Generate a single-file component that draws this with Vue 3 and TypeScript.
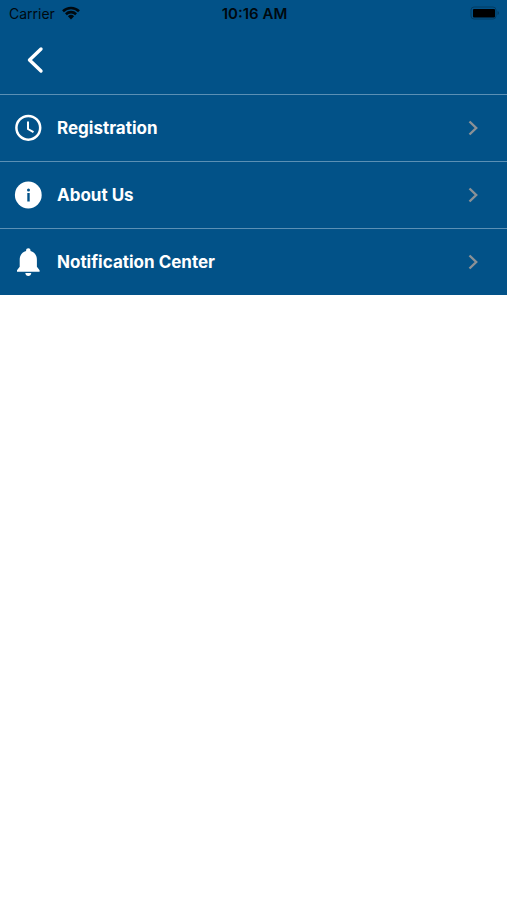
<script setup lang="ts">
type IconName = 'clock' | 'info' | 'bell'

interface MenuItem {
  label: string
  icon: IconName
}

const items: MenuItem[] = [
  { label: 'Registration', icon: 'clock' },
  { label: 'About Us', icon: 'info' },
  { label: 'Notification Center', icon: 'bell' },
]
</script>

<template>
  <main class="screen">
    <div class="status">
      <div class="carrier">
        <span>Carrier</span>
        <svg class="wifi" viewBox="0 0 18 14" aria-hidden="true">
          <path d="M1 5.2a11.6 11.6 0 0 1 16 0M3.9 8.2a7.4 7.4 0 0 1 10.2 0" />
          <path class="dot" d="M5.9 10.2a4.6 4.6 0 0 1 6.2 0L9 13.4z" />
        </svg>
      </div>
      <time class="time">10:16 AM</time>
      <div class="power">
        <svg class="battery" viewBox="0 0 30 14" aria-hidden="true">
          <rect class="shell" x="1" y="1" width="25" height="12" rx="3" />
          <rect x="3" y="3" width="22" height="8.500" rx="1" />
          <path class="cap" d="M27.5 5v4q1.5-.6 1.5-2t-1.5-2z" />
        </svg>
      </div>
    </div>
    <header class="bar">
      <button class="back" type="button" aria-label="Back">
        <svg viewBox="0 0 18 28" aria-hidden="true">
          <path d="M15 3 3.500 14 15 25" />
        </svg>
      </button>
    </header>
    <nav class="menu">
      <a v-for="item in items" :key="item.label" class="row" href="#">
        <svg v-if="item.icon === 'clock'" class="icon" viewBox="0 0 28 28" aria-hidden="true">
          <circle class="line" cx="14.300" cy="13.800" r="11.900" />
          <path class="line hands" d="M14 7.500V15l5.500 3.200" />
        </svg>
        <svg v-else-if="item.icon === 'info'" class="icon" viewBox="0 0 28 28" aria-hidden="true">
          <circle cx="14.300" cy="14" r="13.400" />
          <circle class="cut" cx="14.500" cy="9" r="1.500" />
          <path class="cut" d="M13.300 12h2.400v8.500h-2.400z" />
        </svg>
        <svg v-else class="icon" viewBox="0 0 28 28" aria-hidden="true">
          <path
            d="M14.300.2c-1.300 0-2.200.9-2.200 2.100v.8c-4 1-6.400 4.300-6.400 8.600v7.100L3 22.200v1.500h22.600v-1.500l-2.700-3.400v-7.100c0-4.300-2.400-7.600-6.400-8.600v-.8c0-1.200-.9-2.100-2.200-2.100z"
          />
          <path d="M11.300 25h6q-.4 3-3 3t-3-3z" />
        </svg>
        <span class="label">{{ item.label }}</span>
        <svg class="chevron" viewBox="0 0 10 16" aria-hidden="true">
          <path d="m1.500 1.500 6.700 6.500-6.700 6.500" />
        </svg>
      </a>
    </nav>
  </main>
</template>

<style>
body {
  margin: 0;
  background: #fff;
}
</style>

<style scoped>
.screen {
  font-family: Inter, "Liberation Sans", sans-serif;
  background: #025288;
}

.status {
  display: grid;
  grid-template-columns: 1fr auto 1fr;
  align-items: center;
  height: 26px;
  padding: 0 7px 0 9px;
  color: #00090f;
  font-size: 14px;
}

.carrier {
  display: flex;
  align-items: center;
  gap: 7px;
}

.wifi {
  width: 18px;
  height: 14px;
  fill: none;
  stroke: #00090f;
  stroke-width: 2.6;
}

.wifi .dot {
  fill: #00090f;
  stroke: none;
}

.time {
  font-size: 15px;
  font-weight: 600;
}

.power {
  display: flex;
  justify-content: flex-end;
}

.battery {
  width: 30px;
  height: 14px;
  fill: #000;
}

.battery .shell {
  fill: none;
  stroke: #033c63;
}

.battery .cap {
  fill: #033c63;
}

.bar {
  display: flex;
  align-items: center;
  height: 68px;
  padding: 0 26px;
  box-sizing: border-box;
}

.back {
  display: flex;
  padding: 0;
  border: 0;
  background: none;
}

.back svg {
  width: 18px;
  height: 28px;
  fill: none;
  stroke: #fff;
  stroke-width: 3.4;
  stroke-linecap: round;
  stroke-linejoin: round;
}

.row {
  display: flex;
  align-items: center;
  height: 67px;
  padding: 0 29px 0 14px;
  box-sizing: border-box;
  border-top: 1px solid #5b90b5;
  color: #fff;
  text-decoration: none;
}

.icon {
  width: 28px;
  height: 28px;
  margin-right: 15px;
  fill: #fff;
}

.line {
  fill: none;
  stroke: #fff;
  stroke-width: 2.5;
}

.hands {
  stroke-width: 2;
}

.cut {
  fill: #025288;
}

.label {
  flex: 1;
  font-size: 17px;
  font-weight: 700;
}

.chevron {
  width: 10px;
  height: 16px;
  fill: none;
  stroke: #8b9196;
  stroke-width: 2.4;
}
</style>
